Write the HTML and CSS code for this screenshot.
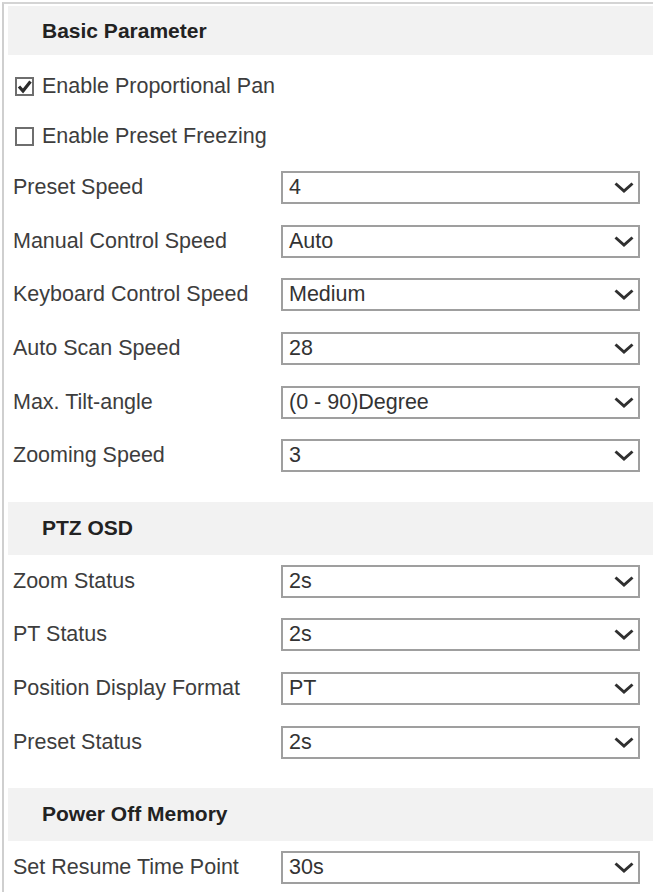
FILE: index.html
```html
<!DOCTYPE html>
<html lang="en">
<head>
<meta charset="utf-8">
<title>PTZ Configuration</title>
<link rel="stylesheet" href="styles.css">
</head>
<body>
<div class="panel">
  <div class="section-head section-head--first">Basic Parameter</div>
  <div class="checks">
    <label class="check-row">
      <svg class="checkbox" width="19" height="19" viewBox="0 0 19 19">
        <rect x="1" y="1" width="17" height="17" fill="#fff" stroke="#6e6e6e" stroke-width="2"/>
        <path d="M4 9.5 L8 14 L15.5 4.5" fill="none" stroke="#2b2b2b" stroke-width="3.2" stroke-linejoin="miter"/>
      </svg>
      <span>Enable Proportional Pan</span>
    </label>
    <label class="check-row">
      <svg class="checkbox" width="19" height="19" viewBox="0 0 19 19">
        <rect x="1" y="1" width="17" height="17" fill="#fff" stroke="#6e6e6e" stroke-width="2"/>
      </svg>
      <span>Enable Preset Freezing</span>
    </label>
  </div>

  <div class="field"><span class="label">Preset Speed</span><div class="select"><span>4</span><svg class="chev" width="20" height="11" viewBox="0 0 20 11"><path d="M1.5 1.5 L10 9 L18.5 1.5" fill="none" stroke="#303030" stroke-width="3"/></svg></div></div>
  <div class="field"><span class="label">Manual Control Speed</span><div class="select"><span>Auto</span><svg class="chev" width="20" height="11" viewBox="0 0 20 11"><path d="M1.5 1.5 L10 9 L18.5 1.5" fill="none" stroke="#303030" stroke-width="3"/></svg></div></div>
  <div class="field"><span class="label">Keyboard Control Speed</span><div class="select"><span>Medium</span><svg class="chev" width="20" height="11" viewBox="0 0 20 11"><path d="M1.5 1.5 L10 9 L18.5 1.5" fill="none" stroke="#303030" stroke-width="3"/></svg></div></div>
  <div class="field"><span class="label">Auto Scan Speed</span><div class="select"><span>28</span><svg class="chev" width="20" height="11" viewBox="0 0 20 11"><path d="M1.5 1.5 L10 9 L18.5 1.5" fill="none" stroke="#303030" stroke-width="3"/></svg></div></div>
  <div class="field"><span class="label">Max. Tilt-angle</span><div class="select"><span>(0 - 90)Degree</span><svg class="chev" width="20" height="11" viewBox="0 0 20 11"><path d="M1.5 1.5 L10 9 L18.5 1.5" fill="none" stroke="#303030" stroke-width="3"/></svg></div></div>
  <div class="field"><span class="label">Zooming Speed</span><div class="select"><span>3</span><svg class="chev" width="20" height="11" viewBox="0 0 20 11"><path d="M1.5 1.5 L10 9 L18.5 1.5" fill="none" stroke="#303030" stroke-width="3"/></svg></div></div>

  <div class="section-head">PTZ OSD</div>
  <div class="field"><span class="label">Zoom Status</span><div class="select"><span>2s</span><svg class="chev" width="20" height="11" viewBox="0 0 20 11"><path d="M1.5 1.5 L10 9 L18.5 1.5" fill="none" stroke="#303030" stroke-width="3"/></svg></div></div>
  <div class="field"><span class="label">PT Status</span><div class="select"><span>2s</span><svg class="chev" width="20" height="11" viewBox="0 0 20 11"><path d="M1.5 1.5 L10 9 L18.5 1.5" fill="none" stroke="#303030" stroke-width="3"/></svg></div></div>
  <div class="field"><span class="label">Position Display Format</span><div class="select"><span>PT</span><svg class="chev" width="20" height="11" viewBox="0 0 20 11"><path d="M1.5 1.5 L10 9 L18.5 1.5" fill="none" stroke="#303030" stroke-width="3"/></svg></div></div>
  <div class="field"><span class="label">Preset Status</span><div class="select"><span>2s</span><svg class="chev" width="20" height="11" viewBox="0 0 20 11"><path d="M1.5 1.5 L10 9 L18.5 1.5" fill="none" stroke="#303030" stroke-width="3"/></svg></div></div>

  <div class="section-head">Power Off Memory</div>
  <div class="field"><span class="label">Set Resume Time Point</span><div class="select"><span>30s</span><svg class="chev" width="20" height="11" viewBox="0 0 20 11"><path d="M1.5 1.5 L10 9 L18.5 1.5" fill="none" stroke="#303030" stroke-width="3"/></svg></div></div>
</div>
</body>
</html>
```
FILE: styles.css
```css
* {
  box-sizing: border-box;
}

html,
body {
  margin: 0;
  background: #fff;
}

body {
  font-family: "Liberation Sans", Arial, sans-serif;
  font-size: 21.5px;
  color: #3d3d3d;
  overflow: hidden;
}

/* outer frame: only top and left edges are drawn */
.panel {
  margin: 2px 0 0 2px;
  padding: 2px 0 0 4px;
  border-top: 2px solid #d4d4d4;
  border-left: 2px solid #cfcfcf;
  min-height: 900px;
}

.section-head {
  display: flex;
  align-items: center;
  height: 53px;
  margin-top: 19px;
  padding-left: 34px;
  background: #f2f2f2;
  font-size: 21px;
  font-weight: bold;
  color: #222;
}

.section-head--first {
  height: 49px;
  margin-top: 0;
}

.checks {
  padding-top: 6px;
}

.check-row {
  display: flex;
  align-items: center;
  gap: 8px;
  height: 50px;
  padding-left: 7px;
}

.checkbox {
  flex: none;
}

.field {
  display: grid;
  grid-template-columns: 268px 359px;
  align-items: center;
  height: 53.6px;
  padding-left: 5px;
}

.label {
  white-space: nowrap;
}

.select {
  display: flex;
  align-items: center;
  justify-content: space-between;
  height: 33px;
  padding: 0 4px 0 6px;
  border: 2px solid #9f9f9f;
  background: #fff;
  color: #333;
}

.chev {
  flex: none;
}
```
